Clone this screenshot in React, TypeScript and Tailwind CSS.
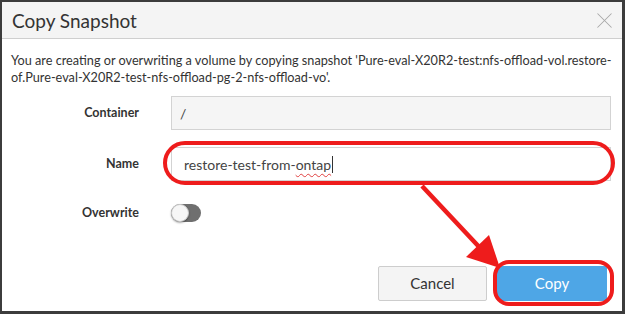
import React from 'react';
import { X } from 'lucide-react';

const font = { fontFamily: 'Lato, "Liberation Sans", Arial, sans-serif' };

const FieldRow = ({ label, children, className = '' }: { label: string; children: React.ReactNode; className?: string }) => (
  <div className={`flex items-center ${className}`}>
    <div className="w-[128px] shrink-0 text-right text-[12.5px] font-bold text-[#333]">{label}</div>
    <div className="ml-[32px] flex-1">{children}</div>
  </div>
);

export default function App() {
  return (
    <div
      style={font}
      className="relative w-[625px] h-[314px] bg-white border-l-2 border-t-2 border-r-[3px] border-b-[3px] border-[#3c3c3c] overflow-hidden"
    >
      {/* Header */}
      <div className="h-[37px] bg-[#f4f4f4] border-b border-[#cfcfcf] flex items-center justify-between pl-[10px] pr-[4px]">
        <h1 className="text-[19px] text-[#333] leading-none pt-[1px]">Copy Snapshot</h1>
        <X size={27} strokeWidth={0.9} className="text-[#a8a8a8]" />
      </div>

      {/* Body */}
      <div className="pl-[9px] pr-[11px]">
        <p className="mt-[13px] text-[12.7px] leading-[17px] text-[#333] whitespace-nowrap">
          You are creating or overwriting a volume by copying snapshot 'Pure-eval-X20R2-test:nfs-offload-vol.restore-
          <br />
          of.Pure-eval-X20R2-test-nfs-offload-pg-2-nfs-offload-vo'.
        </p>

        <FieldRow label="Container" className="mt-[10px]">
          <div className="h-[34px] bg-[#f5f5f5] border border-[#d3d3d3] flex items-center pl-[8px] text-[14px] text-[#444]">/</div>
        </FieldRow>

        <FieldRow label="Name" className="mt-[17px]">
          <div className="h-[34px] bg-white border border-[#d3d3d3] flex items-center pl-[12px] text-[14px] text-[#444]">
            <span>
              restore-test-from-
              <span className="underline decoration-wavy decoration-[#e04040] decoration-1 underline-offset-[3px]">ontap</span>
            </span>
            <span className="w-px h-[17px] bg-[#333] ml-[1px]" />
          </div>
        </FieldRow>

        <FieldRow label="Overwrite" className="mt-[23px]">
          <div className="w-[30px] h-[18px] rounded-full bg-[#6f6f6f] relative">
            <div className="absolute left-0 top-0 w-[18px] h-[18px] rounded-full bg-[#f6f6f6] border border-[#c9c9c9] shadow-[0_1px_2px_rgba(0,0,0,0.35)]" />
          </div>
        </FieldRow>

        <div className="mt-[43px] flex justify-end gap-[10px] pr-[4px]">
          <button className="w-[109px] h-[35px] bg-[#f4f4f4] border border-[#cdcdcd] rounded-[2px] text-[15px] text-[#333]">
            Cancel
          </button>
          <button className="w-[110px] h-[35px] bg-[#4ea6e6] rounded-[2px] text-[15px] text-white">Copy</button>
        </div>
      </div>

      {/* Annotation overlays */}
      <div className="absolute left-[161px] top-[139px] w-[452px] h-[44px] rounded-[22px] border-[4px] border-[#ee1c1c] pointer-events-none" />
      <div className="absolute left-[491px] top-[258px] w-[121px] h-[46px] rounded-[16px] border-[4px] border-[#ee1c1c] pointer-events-none" />
      <svg className="absolute left-0 top-0 pointer-events-none" width="625" height="314">
        <line x1="420" y1="184" x2="480" y2="248" stroke="#ee1c1c" strokeWidth="4.5" />
        <polygon points="464,255 487,233 498,266" fill="#ee1c1c" />
      </svg>
    </div>
  );
}
